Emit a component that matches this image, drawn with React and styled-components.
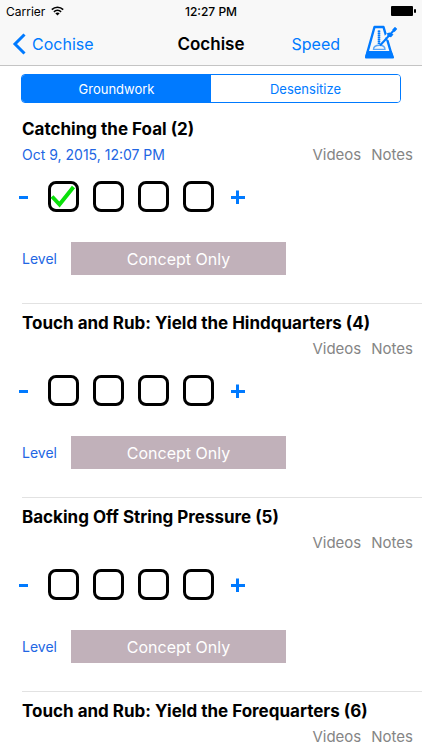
import React, { useState } from "react";
import styled, { createGlobalStyle } from "styled-components";

const BLUE = "#007aff";
const LINK = "#2266e3";

const GlobalStyle = createGlobalStyle`
  * {
    box-sizing: border-box;
  }

  body {
    margin: 0;
    background: #fff;
    color: #000;
    font-family: Inter, "Liberation Sans", sans-serif;
  }

  button {
    margin: 0;
    padding: 0;
    border: 0;
    background: none;
    font-family: inherit;
    cursor: pointer;
  }
`;

const Screen = styled.div`
  display: flex;
  flex-direction: column;
  height: 100vh;
`;

const TopBar = styled.header`
  flex: none;
  background: #f8f8f8;
  border-bottom: 1px solid #c4c4c4;
`;

const StatusBar = styled.div`
  display: grid;
  grid-template-columns: 1fr auto 1fr;
  align-items: center;
  height: 22px;
  padding: 0 6px;
  font-size: 12px;
`;

const Carrier = styled.div`
  display: flex;
  align-items: center;
  gap: 6px;
`;

const Clock = styled.div`
  font-weight: 500;
`;

const Battery = styled.svg`
  justify-self: end;
`;

const NavBar = styled.nav`
  display: grid;
  grid-template-columns: 1fr auto 1fr;
  align-items: center;
  height: 43px;
  padding: 0 24px 0 12px;
`;

const NavButton = styled.button`
  display: flex;
  align-items: center;
  gap: 6px;
  color: ${BLUE};
  font-size: 16px;
  line-height: 20px;
`;

const NavTitle = styled.h1`
  margin: 0;
  padding-left: 12px;
  font-size: 17px;
  font-weight: 600;
  line-height: 20px;
`;

const NavActions = styled.div`
  display: flex;
  align-items: center;
  justify-content: flex-end;
  gap: 24px;
`;

const Segments = styled.div`
  display: flex;
  flex: none;
  height: 29px;
  margin: 8px 21px 7px;
  border: 1px solid ${BLUE};
  border-radius: 4px;
  overflow: hidden;
`;

const Segment = styled.button`
  flex: 1;
  background: ${props => (props.$active ? BLUE : "#fff")};
  color: ${props => (props.$active ? "#fff" : BLUE)};
  font-size: 13px;
`;

const List = styled.ul`
  flex: 1;
  min-height: 0;
  margin: 0;
  padding: 0 0 0 22px;
  list-style: none;
  overflow-y: auto;
  scrollbar-width: none;
`;

const Row = styled.li`
  height: 194px;
  padding-top: 8px;
  border-bottom: 1px solid #e2e2e2;
`;

const Title = styled.h2`
  margin: 0;
  font-size: 17px;
  font-weight: 700;
  line-height: 22px;
`;

const Meta = styled.div`
  display: flex;
  align-items: center;
  height: 28px;
  padding-right: 9px;
`;

const DateText = styled.time`
  color: ${LINK};
  font-size: 14px;
`;

const Links = styled.div`
  display: flex;
  gap: 10px;
  margin-left: auto;
`;

const GrayButton = styled.button`
  color: #858585;
  font-size: 15px;
`;

const Counter = styled.div`
  display: flex;
  align-items: center;
  gap: 14px;
  height: 31px;
  margin-top: 13px;
`;

const StepButton = styled.button`
  display: flex;
  justify-content: center;
  width: 20px;
  margin-left: ${props => (props.$first ? "-8px" : "0")};
  color: ${BLUE};
`;

const CheckLabel = styled.label`
  display: grid;
  width: 31px;
  height: 31px;

  > * {
    grid-area: 1 / 1;
  }
`;

const CheckInput = styled.input`
  appearance: none;
  width: 31px;
  height: 31px;
  margin: 0;
  border: 3px solid #000;
  border-radius: 8px;
  background: #fff;
`;

const CheckMark = styled.svg`
  pointer-events: none;
`;

const LevelRow = styled.div`
  display: flex;
  align-items: center;
  margin-top: 30px;
`;

const LevelLabel = styled.label`
  width: 49px;
  color: ${LINK};
  font-size: 14px;
`;

const LevelButton = styled.button`
  width: 215px;
  height: 33px;
  background: #c1b1ba;
  color: #fff;
  font-size: 16px;
`;

const WifiIcon = () => (
  <svg width="13" height="10" viewBox="0 0 13 10" fill="none" stroke="#000" strokeWidth="1.6">
    <path d="M0.8 3.6C4 0.4 9 0.4 12.2 3.6" />
    <path d="M2.9 5.8C5 3.8 8 3.8 10.1 5.8" />
    <path d="M4.3 7.2C5.6 6.1 7.4 6.1 8.7 7.2L6.5 9.5Z" fill="#000" stroke="none" />
  </svg>
);

const BackIcon = () => (
  <svg width="14" height="22" viewBox="0 0 14 22" fill="none" stroke={BLUE} strokeWidth="3">
    <path d="M12.5 1.5L3 11L12.5 20.5" />
  </svg>
);

const MetronomeIcon = () => (
  <svg width="34" height="38" viewBox="0 0 34 38" fill="none" stroke={BLUE}>
    <path d="M10.5 2H19.5L28 31H2.4Z" strokeWidth="2.4" strokeLinejoin="round" />
    <path d="M3 26H27.6L30 32Q30.4 33.6 28.8 33.6H2.2Q0.6 33.6 1 32Z" fill={BLUE} stroke="none" />
    <path d="M15 5V19" stroke="#5ba6f8" strokeWidth="2.4" />
    <path d="M15 6V19" strokeWidth="2.4" strokeDasharray="1 1" />
    <path d="M9.5 24.4C9.5 21.4 12 20.2 15.5 20.2S21 21.6 21 24.4Z" fill="#f8f8f8" stroke="#5ba6f8" strokeWidth="1.4" />
    <path d="M21.5 10L25.5 14" stroke="#f8f8f8" strokeWidth="3.5" />
    <path d="M16 20.5L32 3" strokeWidth="2" />
    <path d="M23 8.2L25.5 7.6L29.5 9.6L27 12.2L23.6 11.6Z" fill={BLUE} stroke="none" />
    <path d="M29.4 5.8L32 3" strokeWidth="3.2" />
  </svg>
);

const MinusIcon = () => (
  <svg width="10" height="14" viewBox="0 0 10 14" stroke={BLUE} strokeWidth="3">
    <path d="M0 7.5H9" />
  </svg>
);

const PlusIcon = () => (
  <svg width="14" height="14" viewBox="0 0 14 14" stroke={BLUE} strokeWidth="3">
    <path d="M0 7.5H14M6.5 0.5V14" />
  </svg>
);

const exercises = [
  { id: 2, title: "Catching the Foal (2)", date: "Oct 9, 2015, 12:07 PM", done: 1 },
  { id: 4, title: "Touch and Rub: Yield the Hindquarters (4)", done: 0 },
  { id: 5, title: "Backing Off String Pressure (5)", done: 0 },
  { id: 6, title: "Touch and Rub: Yield the Forequarters (6)", done: 0 }
];

const Exercise = ({ item }) => {
  const [done, setDone] = useState(item.done);

  return (
    <Row>
      <Title>{item.title}</Title>
      <Meta>
        {item.date && <DateText>{item.date}</DateText>}
        <Links>
          <GrayButton>Videos</GrayButton>
          <GrayButton>Notes</GrayButton>
        </Links>
      </Meta>
      <Counter>
        <StepButton $first aria-label="Remove one" onClick={() => setDone(Math.max(0, done - 1))}>
          <MinusIcon />
        </StepButton>
        {[1, 2, 3, 4].map(n => (
          <CheckLabel key={n}>
            <CheckInput
              type="checkbox"
              aria-label={`Session ${n}`}
              checked={n <= done}
              onChange={() => setDone(n <= done ? n - 1 : n)}
            />
            {n <= done && (
              <CheckMark width="31" height="31" viewBox="0 0 31 31" fill="none">
                <path d="M4 15.5L11.5 23.5L25.5 6" stroke="#0be00b" strokeWidth="4" />
              </CheckMark>
            )}
          </CheckLabel>
        ))}
        <StepButton aria-label="Add one" onClick={() => setDone(Math.min(4, done + 1))}>
          <PlusIcon />
        </StepButton>
      </Counter>
      <LevelRow>
        <LevelLabel htmlFor={`level-${item.id}`}>Level</LevelLabel>
        <LevelButton id={`level-${item.id}`}>Concept Only</LevelButton>
      </LevelRow>
    </Row>
  );
};

export default () => {
  const [tab, setTab] = useState("Groundwork");

  return (
    <Screen>
      <GlobalStyle />
      <TopBar>
        <StatusBar>
          <Carrier>
            Carrier
            <WifiIcon />
          </Carrier>
          <Clock>12:27 PM</Clock>
          <Battery width="25" height="10" viewBox="0 0 25 10">
            <rect width="22" height="10" rx="1" />
            <rect x="23" y="3" width="2" height="4" rx="1" />
          </Battery>
        </StatusBar>
        <NavBar>
          <NavButton>
            <BackIcon />
            Cochise
          </NavButton>
          <NavTitle>Cochise</NavTitle>
          <NavActions>
            <NavButton>Speed</NavButton>
            <NavButton aria-label="Metronome">
              <MetronomeIcon />
            </NavButton>
          </NavActions>
        </NavBar>
      </TopBar>
      <Segments>
        {["Groundwork", "Desensitize"].map(name => (
          <Segment key={name} $active={tab === name} onClick={() => setTab(name)}>
            {name}
          </Segment>
        ))}
      </Segments>
      <List>
        {exercises.map(item => (
          <Exercise key={item.id} item={item} />
        ))}
      </List>
    </Screen>
  );
};
